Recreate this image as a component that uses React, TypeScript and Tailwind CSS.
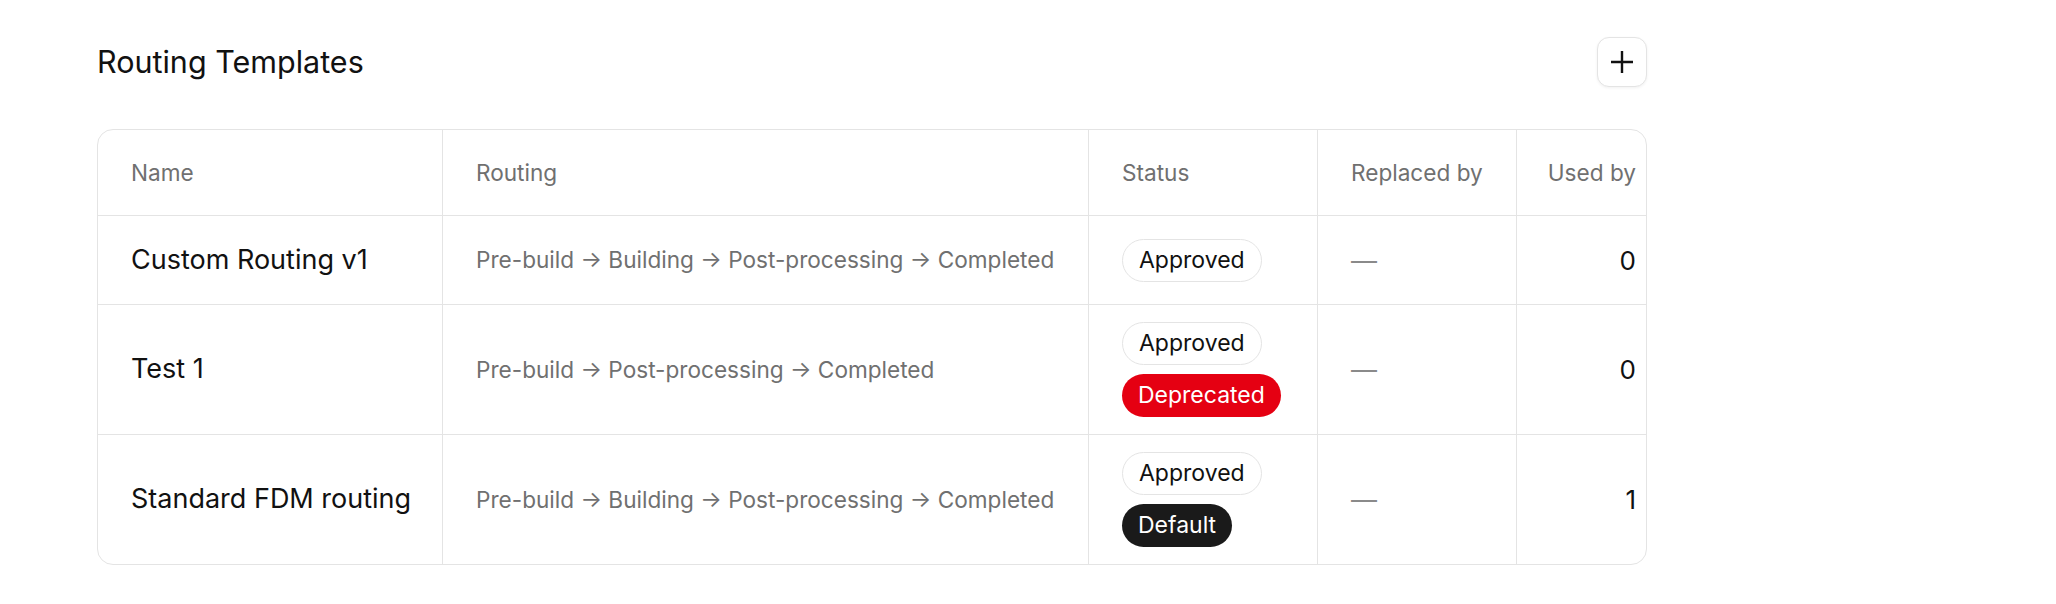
type Template = {
  name: string;
  routing: string;
  statuses: ("approved" | "deprecated" | "default")[];
  replacedBy: string | null;
  usedBy: number;
};

const templates: Template[] = [
  {
    name: "Custom Routing v1",
    routing: "Pre-build → Building → Post-processing → Completed",
    statuses: ["approved"],
    replacedBy: null,
    usedBy: 0,
  },
  {
    name: "Test 1",
    routing: "Pre-build → Post-processing → Completed",
    statuses: ["approved", "deprecated"],
    replacedBy: null,
    usedBy: 0,
  },
  {
    name: "Standard FDM routing",
    routing: "Pre-build → Building → Post-processing → Completed",
    statuses: ["approved", "default"],
    replacedBy: null,
    usedBy: 1,
  },
];

function StatusBadge({ status }: { status: Template["statuses"][number] }) {
  const styles = {
    approved: "border border-[#e4e4e4] bg-white text-[#111]",
    deprecated: "bg-[#e50012] text-white",
    default: "bg-[#1a1a1a] text-white",
  };
  const labels = {
    approved: "Approved",
    deprecated: "Deprecated",
    default: "Default",
  };

  return (
    <span
      className={`inline-flex h-[43px] items-center rounded-full px-[16px] text-[23px] leading-none ${styles[status]}`}
    >
      {labels[status]}
    </span>
  );
}

export default function App() {
  return (
    <div
      className="min-h-screen bg-white pl-[97px] pt-[37px]"
      style={{ fontFamily: "Inter, 'Noto Sans', sans-serif" }}
    >
      <div className="w-[1550px]">
        {/* Header */}
        <div className="flex items-center justify-between">
          <h1 className="text-[30.5px] font-normal leading-none text-[#111]">
            Routing Templates
          </h1>
          <button className="flex h-[50px] w-[50px] items-center justify-center rounded-[12px] border border-[#e4e4e4] bg-white shadow-[0_1px_3px_rgba(0,0,0,0.06)]">
            <svg
              width="22"
              height="22"
              viewBox="0 0 22 22"
              fill="none"
              stroke="#111"
              strokeWidth="2.4"
            >
              <path d="M11 0v22M0 11h22" />
            </svg>
          </button>
        </div>

        {/* Table */}
        <div className="mt-[42px] overflow-hidden rounded-[16px] border border-[#e4e4e4]">
          <div className="grid grid-cols-[345px_646px_229px_199px_1fr]">
            {/* Head */}
            <div className="flex h-[86px] items-center border-r border-b border-[#e4e4e4] pl-[33px] text-[22.6px] text-[#707070]">
              Name
            </div>
            <div className="flex h-[86px] items-center border-r border-b border-[#e4e4e4] pl-[33px] text-[22.6px] text-[#707070]">
              Routing
            </div>
            <div className="flex h-[86px] items-center border-r border-b border-[#e4e4e4] pl-[33px] text-[22.6px] text-[#707070]">
              Status
            </div>
            <div className="flex h-[86px] items-center border-r border-b border-[#e4e4e4] pl-[33px] text-[22.6px] text-[#707070]">
              Replaced by
            </div>
            <div className="flex h-[86px] items-center justify-end border-b border-[#e4e4e4] pr-[10px] text-[22.6px] text-[#707070]">
              Used by
            </div>

            {/* Rows */}
            {templates.map((t, i) => {
              const last = i === templates.length - 1;
              const h = i === 0 ? "h-[89px]" : last ? "h-[129px]" : "h-[130px]";
              const b = last ? "" : "border-b";
              return (
                <div key={t.name} className="contents">
                  <div
                    className={`flex ${h} items-center border-r ${b} border-[#e4e4e4] pl-[33px] text-[27px] text-[#111]`}
                  >
                    {t.name}
                  </div>
                  <div
                    className={`flex ${h} items-center border-r ${b} border-[#e4e4e4] pl-[33px] text-[22.6px] text-[#707070]`}
                  >
                    {t.routing}
                  </div>
                  <div
                    className={`flex ${h} flex-col items-start justify-center gap-[9px] border-r ${b} border-[#e4e4e4] pl-[33px]`}
                  >
                    {t.statuses.map((s) => (
                      <StatusBadge key={s} status={s} />
                    ))}
                  </div>
                  <div
                    className={`flex ${h} items-center border-r ${b} border-[#e4e4e4] pl-[33px] text-[26px] text-[#8a8a8a]`}
                  >
                    {t.replacedBy ?? "—"}
                  </div>
                  <div
                    className={`flex ${h} items-center justify-end ${b} border-[#e4e4e4] pr-[10px] text-[26px] text-[#111]`}
                  >
                    {t.usedBy}
                  </div>
                </div>
              );
            })}
          </div>
        </div>
      </div>
    </div>
  );
}
